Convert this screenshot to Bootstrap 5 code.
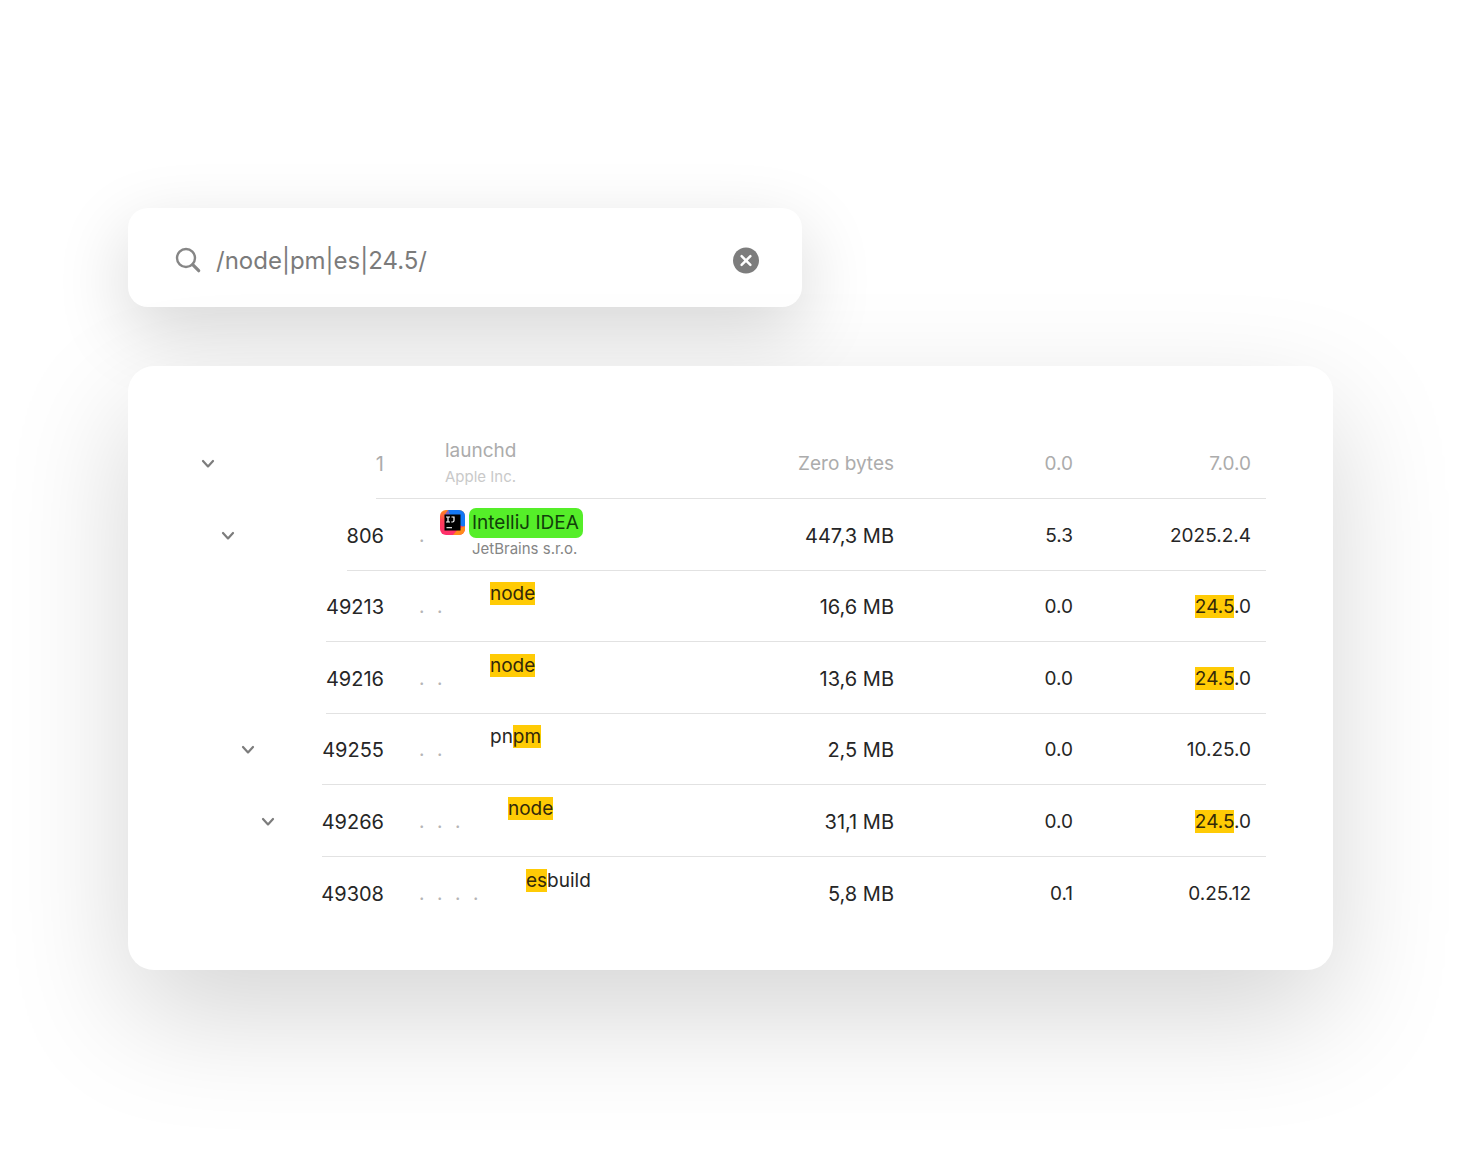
<!DOCTYPE html>
<html lang="en">
<head>
<meta charset="utf-8">
<meta name="viewport" content="width=device-width, initial-scale=1">
<title>Process search</title>
<link href="https://cdn.jsdelivr.net/npm/bootstrap@5.3.0/dist/css/bootstrap.min.css" rel="stylesheet">
<style>
body { font-family: Inter, "Liberation Sans", sans-serif; background: #fff; color: #262626; }
.stage { padding: 208px 127px 120px 128px; }
.panel { background: #fff; position: relative; }
.search-panel { max-width: 674px; height: 99px; border-radius: 20px; padding: 6px 42px 0 46px; margin-bottom: 59px; box-shadow: 0 24px 72px rgba(0, 0, 0, .16); }
.search-panel .form-control { font-size: 24px; line-height: 32px; color: #7b7b7b; padding: 0; margin-left: 14px; }
.clear-btn svg, .search-panel svg { display: block; }
.list-panel { border-radius: 26px; padding: 62px 67px 42px 65px; box-shadow: 0 44px 120px rgba(0, 0, 0, .17); }
.proc-table { table-layout: fixed; border-collapse: separate; border-spacing: 0; font-size: 19px; line-height: 26px; }
.proc-table td { padding: 0; height: 71px; vertical-align: middle; }
.proc-table tr:nth-child(even) td { height: 72px; }
.proc-table td.line { padding-top: 2px; }
.c-tree { width: 100px; }
.c-pid { width: 109px; }
.c-size { width: 140px; }
.c-cpu { width: 179px; }
.c-ver { width: 193px; }
.proc-table tr:not(:last-child) .line,
.proc-table tr:not(:last-child) .pid { border-bottom: 1px solid #e2e2e2; }
.pid { height: 71px; padding: 2px 18px 0 0; font-size: 20px; }
tr:nth-child(even) .pid { height: 72px; }
.size { font-size: 20px; }
.version { padding-right: 15px !important; }
.toggle { margin-left: 8px; line-height: 0; }
.toggle svg { display: block; }
.d1 .toggle { margin-left: 28px; }
.d2 .toggle { margin-left: 48px; }
.d3 .toggle { margin-left: 68px; }
.dots { margin-left: 16px; color: #b5b5b5; }
.dots span { width: 18px; padding-left: 1px; }
.app { width: 36px; padding-left: 4px; }
.plain { margin-left: 43px; }
.slot { margin-left: 36px; }
.vendor { font-size: 15px; color: #858585; min-height: 26px; }
.dim { color: #acacac; }
.dim .size { font-size: 19px; }
.dim .vendor { color: #c9c9c9; }
.hit { background: #ffcb05; color: #33290a; padding: 0; }
.picked { background: #55ee29; color: #11400a; border-radius: 7px; padding: 3px 4px 4px 3px; margin-left: -3px; }
</style>
<script src="https://cdn.jsdelivr.net/npm/bootstrap@5.3.0/dist/js/bootstrap.bundle.min.js"></script>
</head>
<body>
<main class="stage min-vh-100">
  <form class="panel search-panel d-flex align-items-center" onsubmit="return false">
    <label for="query"><svg width="28" height="28" viewBox="0 0 28 28" fill="none" stroke="#868686" stroke-linecap="round" aria-label="Search"><circle cx="12" cy="11" r="9" stroke-width="2.4"/><path d="M18.700 17.700l6 6" stroke-width="3.2"/></svg></label>
    <input id="query" class="form-control border-0 shadow-none bg-transparent" type="text" value="/node|pm|es|24.5/">
    <button class="btn p-0 border-0 clear-btn" type="reset" aria-label="Clear"><svg width="28" height="28" viewBox="0 0 28 28"><circle cx="14" cy="13.5" r="13" fill="#7d7d7d"/><path d="M9.600 9.100l8.800 8.800M18.400 9.100l-8.800 8.800" stroke="#fff" stroke-width="2.5" stroke-linecap="round"/></svg></button>
  </form>

  <section class="panel list-panel">
    <svg class="d-none"><symbol id="chev" viewBox="0 0 14 10"><path d="M2 2l5 5.4L12 2" fill="none" stroke="#7c7c7c" stroke-width="2.2" stroke-linecap="round" stroke-linejoin="round"/></symbol></svg>
    <table class="proc-table w-100">
      <colgroup><col class="c-tree"><col class="c-pid"><col><col class="c-size"><col class="c-cpu"><col class="c-ver"></colgroup>
      <tbody>
        <tr class="dim">
          <td><button class="btn p-0 border-0 toggle" aria-label="Collapse"><svg width="14" height="10"><use href="#chev"/></svg></button></td>
          <td><div class="d-flex justify-content-end"><span class="pid d-flex align-items-center">1</span></div></td>
          <td class="line"><div class="plain"><div>launchd</div><div class="vendor">Apple Inc.</div></div></td>
          <td class="line text-end size">Zero bytes</td><td class="line text-end">0.0</td><td class="line text-end version">7.0.0</td>
        </tr>
        <tr class="d1">
          <td><button class="btn p-0 border-0 toggle" aria-label="Collapse"><svg width="14" height="10"><use href="#chev"/></svg></button></td>
          <td><div class="d-flex justify-content-end"><span class="pid d-flex align-items-center">806</span></div></td>
          <td class="line"><div class="d-flex"><div class="dots d-flex align-items-center"><span>.</span></div>
            <div class="app"><svg class="d-block" width="25" height="25" viewBox="0 0 25 25" aria-label="IntelliJ IDEA">
              <defs><linearGradient id="ga" x1="0" y1="0" x2="0" y2="1"><stop offset="0" stop-color="#ff8a1c"/><stop offset=".45" stop-color="#ff3d5a"/><stop offset="1" stop-color="#ff2f6d"/></linearGradient><clipPath id="gc"><rect width="25" height="25" rx="6"/></clipPath></defs>
              <g clip-path="url(#gc)"><rect width="25" height="25" fill="url(#ga)"/><path d="M8 0h17v17L12 13z" fill="#1478f5"/><path d="M8 0L4 6l8 5z" fill="#7a62c8"/><path d="M25 16l-7 3-5 6h12z" fill="#ff8b1a"/></g>
              <rect x="4.500" y="4.500" width="16" height="16" fill="#000"/>
              <path d="M6 7h4M8 7v5M6 12h4M11.500 7h2.500v3.500q0 1.500-1.500 1.500h-1.200" fill="none" stroke="#fff" stroke-width="1.200"/><path d="M6.500 17.700h5.500" stroke="#fff" stroke-width="1.100"/></svg></div>
            <div><div><span class="picked">IntelliJ IDEA</span></div><div class="vendor">JetBrains s.r.o.</div></div></div></td>
          <td class="line text-end size">447,3 MB</td><td class="line text-end">5.3</td><td class="line text-end version">2025.2.4</td>
        </tr>
        <tr>
          <td></td>
          <td><div class="d-flex justify-content-end"><span class="pid d-flex align-items-center">49213</span></div></td>
          <td class="line"><div class="d-flex"><div class="dots d-flex align-items-center"><span>.</span><span>.</span></div><div class="slot"><div><mark class="hit">node</mark></div><div class="vendor"></div></div></div></td>
          <td class="line text-end size">16,6 MB</td><td class="line text-end">0.0</td><td class="line text-end version"><mark class="hit">24.5</mark>.0</td>
        </tr>
        <tr>
          <td></td>
          <td><div class="d-flex justify-content-end"><span class="pid d-flex align-items-center">49216</span></div></td>
          <td class="line"><div class="d-flex"><div class="dots d-flex align-items-center"><span>.</span><span>.</span></div><div class="slot"><div><mark class="hit">node</mark></div><div class="vendor"></div></div></div></td>
          <td class="line text-end size">13,6 MB</td><td class="line text-end">0.0</td><td class="line text-end version"><mark class="hit">24.5</mark>.0</td>
        </tr>
        <tr class="d2">
          <td><button class="btn p-0 border-0 toggle" aria-label="Collapse"><svg width="14" height="10"><use href="#chev"/></svg></button></td>
          <td><div class="d-flex justify-content-end"><span class="pid d-flex align-items-center">49255</span></div></td>
          <td class="line"><div class="d-flex"><div class="dots d-flex align-items-center"><span>.</span><span>.</span></div><div class="slot"><div>pn<mark class="hit">pm</mark></div><div class="vendor"></div></div></div></td>
          <td class="line text-end size">2,5 MB</td><td class="line text-end">0.0</td><td class="line text-end version">10.25.0</td>
        </tr>
        <tr class="d3">
          <td><button class="btn p-0 border-0 toggle" aria-label="Collapse"><svg width="14" height="10"><use href="#chev"/></svg></button></td>
          <td><div class="d-flex justify-content-end"><span class="pid d-flex align-items-center">49266</span></div></td>
          <td class="line"><div class="d-flex"><div class="dots d-flex align-items-center"><span>.</span><span>.</span><span>.</span></div><div class="slot"><div><mark class="hit">node</mark></div><div class="vendor"></div></div></div></td>
          <td class="line text-end size">31,1 MB</td><td class="line text-end">0.0</td><td class="line text-end version"><mark class="hit">24.5</mark>.0</td>
        </tr>
        <tr>
          <td></td>
          <td><div class="d-flex justify-content-end"><span class="pid d-flex align-items-center">49308</span></div></td>
          <td class="line"><div class="d-flex"><div class="dots d-flex align-items-center"><span>.</span><span>.</span><span>.</span><span>.</span></div><div class="slot"><div><mark class="hit">es</mark>build</div><div class="vendor"></div></div></div></td>
          <td class="line text-end size">5,8 MB</td><td class="line text-end">0.1</td><td class="line text-end version">0.25.12</td>
        </tr>
      </tbody>
    </table>
  </section>
</main>
</body>
</html>
